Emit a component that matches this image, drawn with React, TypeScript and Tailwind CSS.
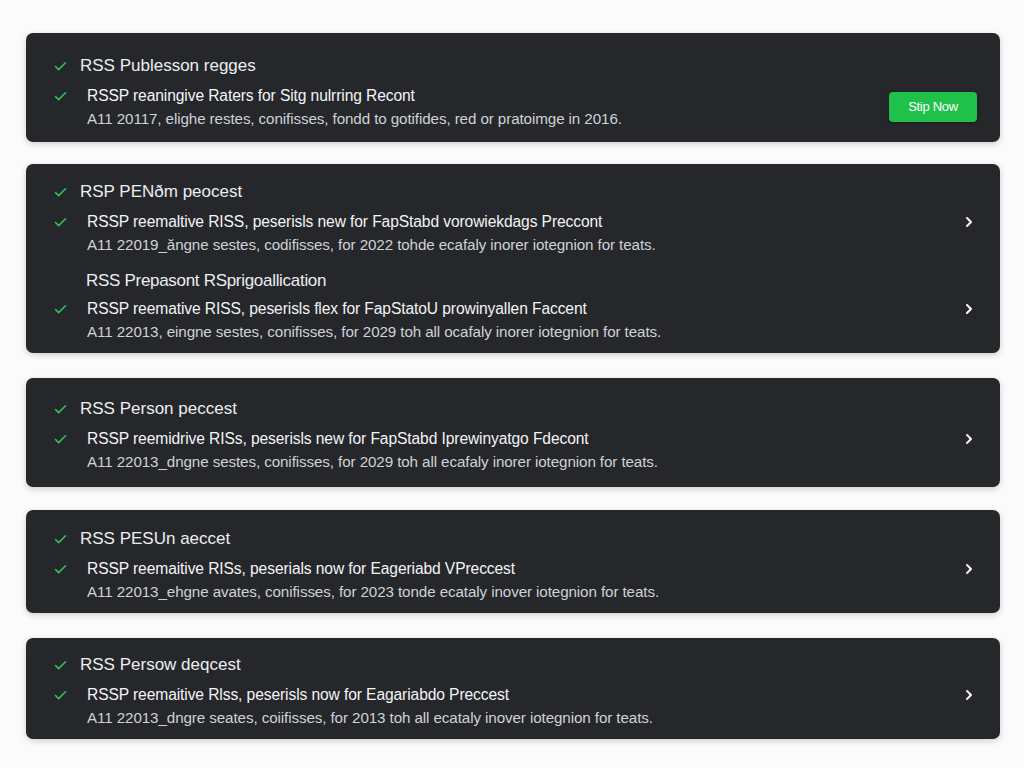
import { Check, ChevronRight } from "lucide-react";

type Row = { text: string; sub: string; heading?: string };

type Feed = {
  title: string;
  rows: Row[];
  action?: string;
  pad: string;
};

// spacing per card follows the screenshot (cards are not perfectly even)
const feeds: Feed[] = [
  {
    title: "RSS Publesson regges",
    action: "Stip Now",
    pad: "pt-[21px] pb-[14px]",
    rows: [
      {
        text: "RSSP reaningive Raters for Sitg nulrring Recont",
        sub: "A11 20117, elighe restes, conifisses, fondd to gotifides, red or pratoimge in 2016.",
      },
    ],
  },
  {
    title: "RSP PENðm peocest",
    pad: "mt-[22px] pt-[16px] pb-[12px]",
    rows: [
      {
        text: "RSSP reemaltive RISS, peserisls new for FapStabd vorowiekdags Preccont",
        sub: "A11 22019_ăngne sestes, codifisses, for 2022 tohde ecafaly inorer iotegnion for teats.",
      },
      {
        heading: "RSS Prepasont RSprigoallication",
        text: "RSSP reemative RISS, peserisls flex for FapStatoU prowinyallen Faccent",
        sub: "A11 22013, eingne sestes, conifisses, for 2029 toh all ocafaly inorer iotegnion for teats.",
      },
    ],
  },
  {
    title: "RSS Person peccest",
    pad: "mt-[25px] pt-[19px] pb-[16px]",
    rows: [
      {
        text: "RSSP reemidrive RISs, peserisls new for FapStabd Iprewinyatgo Fdecont",
        sub: "A11 22013_dngne sestes, conifisses, for 2029 toh all ecafaly inorer iotegnion for teats.",
      },
    ],
  },
  {
    title: "RSS PESUn aeccet",
    pad: "mt-[23px] pt-[17px] pb-[12px]",
    rows: [
      {
        text: "RSSP reemaitive RISs, peserials now for Eageriabd VPreccest",
        sub: "A11 22013_ehgne avates, conifisses, for 2023 tonde ecataly inover iotegnion for teats.",
      },
    ],
  },
  {
    title: "RSS Persow deqcest",
    pad: "mt-[25px] pt-[15px] pb-[12px]",
    rows: [
      {
        text: "RSSP reemaitive Rlss, peserisls now for Eagariabdo Preccest",
        sub: "A11 22013_dngre seates, coiifisses, for 2013 toh all ecataly inover iotegnion for teats.",
      },
    ],
  },
];

function Tick() {
  return <Check className="w-[15px] h-[15px] text-[#2fc05a] shrink-0" strokeWidth={2.6} />;
}

export default function App() {
  return (
    <div
      className="min-h-[768px] bg-[#fbfbfc] pl-[26px] pr-[24px] pt-[33px] pb-[26px] flex flex-col"
      style={{ fontFamily: '"Liberation Sans", Arial, sans-serif' }}
    >
      {feeds.map((feed, i) => (
        <div
          key={i}
          className={`bg-[#25272b] rounded-[7px] shadow-[0_2px_6px_rgba(0,0,0,0.18)] pl-[27px] pr-[23px] ${feed.pad}`}
        >
          {/* Title */}
          <div className="flex items-center h-[24px]">
            <Tick />
            <span className="ml-[12px] text-[17px] text-[#eceef0]">{feed.title}</span>
          </div>

          {feed.rows.map((row, j) => (
            <div key={j}>
              {row.heading && (
                <div className="mt-[15px] h-[24px] flex items-center pl-[33px] text-[17px] text-[#eceef0] tracking-[-0.3px]">
                  {row.heading}
                </div>
              )}
              <div className={`flex items-center ${row.heading ? "mt-[5px]" : "mt-[7px]"}`}>
                <div className="flex-1 min-w-0">
                  <div className="flex items-center h-[22px]">
                    <Tick />
                    <span className="ml-[19px] text-[15.6px] text-[#f3f4f6] tracking-[-0.1px]">{row.text}</span>
                  </div>
                  <div className="h-[21px] flex items-end pl-[34px] text-[15.2px] leading-[19px] text-[#cfd2d6] tracking-[-0.1px]">
                    {row.sub}
                  </div>
                </div>
                {feed.action ? (
                  <button className="w-[88px] h-[30px] rounded-[4px] bg-[#1fc14a] text-white text-[13px] tracking-[-0.3px] shadow-[0_1px_3px_rgba(0,0,0,0.3)]">
                    {feed.action}
                  </button>
                ) : (
                  <ChevronRight className="w-[16px] h-[16px] text-white self-start mt-[3px]" strokeWidth={3} />
                )}
              </div>
            </div>
          ))}
        </div>
      ))}
    </div>
  );
}
